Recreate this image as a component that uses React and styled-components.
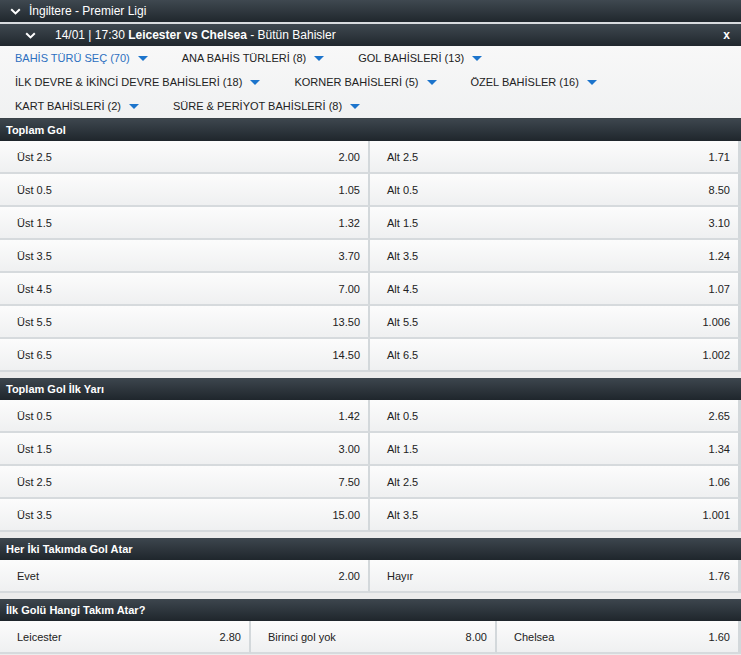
import React from 'react';
import styled, { createGlobalStyle } from 'styled-components';

const GlobalStyle = createGlobalStyle`
    body {
        margin: 0;
        background: #ececec;
        font-family: "Liberation Sans", Arial, sans-serif;
        font-size: 11px;
        color: #222;
    }
`;

const Wrapper = styled.div`
    width: 741px;
    display: flex;
    flex-direction: column;
`;

const DarkBar = styled.div`
    display: flex;
    align-items: center;
    height: ${props => props.h}px;
    padding-left: ${props => props.indent}px;
    background: linear-gradient(#3f4850, #20272d);
    color: #fff;
    font-size: 12px;
    border-top: ${props => props.topLine ? '2px solid #d9dcdf' : 'none'};
`;

const Chevron = styled.svg`
    width: 11px;
    height: 7px;
    margin-right: ${props => props.gap}px;
`;

const Close = styled.span`
    margin-left: auto;
    margin-right: 11px;
    font-weight: bold;
    font-size: 12px;
`;

const Filters = styled.div`
    display: flex;
    flex-wrap: wrap;
    column-gap: 34px;
    padding: 0 15px;
    background: linear-gradient(#f8f8f8, #f0f1f2);
    border-bottom: 1px solid #3a4249;
`;

const FilterItem = styled.div`
    display: flex;
    align-items: center;
    height: 24px;
    font-size: 11px;
    color: ${props => props.active ? '#2c6fc0' : '#222'};
`;

const Triangle = styled.span`
    width: 0;
    height: 0;
    margin-left: 8px;
    border-left: 5px solid transparent;
    border-right: 5px solid transparent;
    border-top: 5px solid #1c74cc;
`;

const Section = styled.div`
    display: flex;
    flex-direction: column;
    margin-bottom: 6px;
`;

const SectionHeader = styled.div`
    height: 22px;
    display: flex;
    align-items: center;
    padding-left: 6px;
    background: linear-gradient(#3d464e, #1f262c);
    color: #fff;
    font-weight: bold;
    font-size: 11px;
`;

const Grid = styled.div`
    display: grid;
    grid-template-columns: ${props => props.cols};
`;

const Cell = styled.div`
    height: 31px;
    display: flex;
    align-items: center;
    justify-content: space-between;
    padding: 0 8px 0 17px;
    background: linear-gradient(#fcfcfc, #eff0f1);
    border-right: ${props => props.edge ? 3 : 2}px solid #d3d8db;
    border-bottom: 2px solid #d6dadd;
    color: #222;
`;

const Chev = ({ gap }) => (
    <Chevron gap={gap} viewBox="0 0 11 7">
        <path d="M1.2 1.2 L5.5 5.4 L9.8 1.2" fill="none" stroke="#fff" strokeWidth="2" />
    </Chevron>
);

const filters = [
    { label: 'BAHİS TÜRÜ SEÇ (70)', active: true },
    { label: 'ANA BAHİS TÜRLERİ (8)' },
    { label: 'GOL BAHİSLERİ (13)' },
    { label: 'İLK DEVRE & İKİNCİ DEVRE BAHİSLERİ (18)' },
    { label: 'KORNER BAHİSLERİ (5)' },
    { label: 'ÖZEL BAHİSLER (16)' },
    { label: 'KART BAHİSLERİ (2)' },
    { label: 'SÜRE & PERİYOT BAHİSLERİ (8)' },
];

const TWO = '370px 1fr';
const THREE = '251px 246px 1fr';

const sections = [
    {
        title: 'Toplam Gol',
        cols: TWO,
        n: 2,
        cells: [
            ['Üst 2.5', '2.00'], ['Alt 2.5', '1.71'],
            ['Üst 0.5', '1.05'], ['Alt 0.5', '8.50'],
            ['Üst 1.5', '1.32'], ['Alt 1.5', '3.10'],
            ['Üst 3.5', '3.70'], ['Alt 3.5', '1.24'],
            ['Üst 4.5', '7.00'], ['Alt 4.5', '1.07'],
            ['Üst 5.5', '13.50'], ['Alt 5.5', '1.006'],
            ['Üst 6.5', '14.50'], ['Alt 6.5', '1.002'],
        ],
    },
    {
        title: 'Toplam Gol İlk Yarı',
        cols: TWO,
        n: 2,
        cells: [
            ['Üst 0.5', '1.42'], ['Alt 0.5', '2.65'],
            ['Üst 1.5', '3.00'], ['Alt 1.5', '1.34'],
            ['Üst 2.5', '7.50'], ['Alt 2.5', '1.06'],
            ['Üst 3.5', '15.00'], ['Alt 3.5', '1.001'],
        ],
    },
    {
        title: 'Her İki Takımda Gol Atar',
        cols: TWO,
        n: 2,
        cells: [['Evet', '2.00'], ['Hayır', '1.76']],
    },
    {
        title: 'İlk Golü Hangi Takım Atar?',
        cols: THREE,
        n: 3,
        cells: [['Leicester', '2.80'], ['Birinci gol yok', '8.00'], ['Chelsea', '1.60']],
    },
];

const App = () => {
    return (
        <Wrapper>
            <GlobalStyle />
            <DarkBar h={22} indent={10}>
                <Chev gap={8} />
                İngiltere - Premier Ligi
            </DarkBar>
            <DarkBar h={22} indent={25} topLine>
                <Chev gap={19} />
                <span>14/01 | 17:30 <b>Leicester vs Chelsea</b> - Bütün Bahisler</span>
                <Close>x</Close>
            </DarkBar>
            <Filters>
                {filters.map(f => (
                    <FilterItem key={f.label} active={f.active}>
                        {f.label}
                        <Triangle />
                    </FilterItem>
                ))}
            </Filters>
            {sections.map(s => (
                <Section key={s.title}>
                    <SectionHeader>{s.title}</SectionHeader>
                    <Grid cols={s.cols}>
                        {s.cells.map((c, i) => (
                            <Cell key={i} edge={i % s.n === s.n - 1}>
                                <span>{c[0]}</span>
                                <span>{c[1]}</span>
                            </Cell>
                        ))}
                    </Grid>
                </Section>
            ))}
        </Wrapper>
    );
};

export default App;
